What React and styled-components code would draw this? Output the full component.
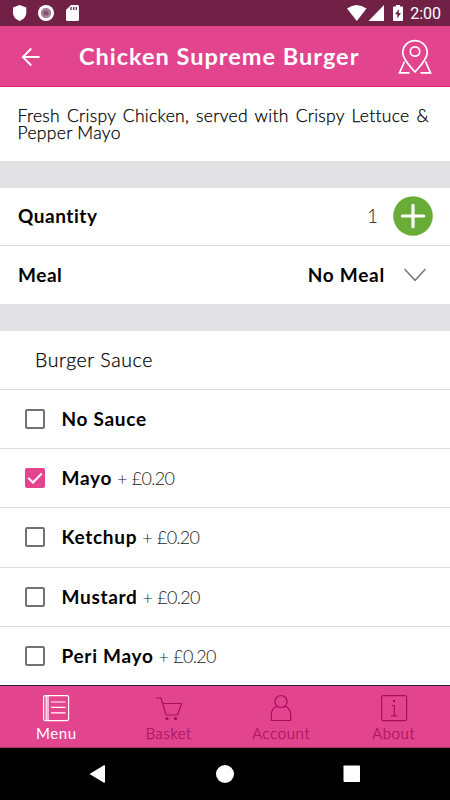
import React, { useState } from 'react';
import styled, { createGlobalStyle } from 'styled-components';

const GlobalStyle = createGlobalStyle`
    * {
        box-sizing: border-box;
    }
    body {
        margin: 0;
        background: #ffffff;
        font-family: Lato, "Open Sans", sans-serif;
    }
`

/* Styled Components */

const Screen = styled.div`
    width: 450px;
    height: 800px;
    display: flex;
    flex-direction: column;
    overflow: hidden;
    background: #ffffff;
    color: #000000;
`
const StatusBar = styled.div`
    height: 26px;
    flex: none;
    display: flex;
    justify-content: space-between;
    background: #722146;
`
const Header = styled.header`
    height: 61px;
    flex: none;
    display: flex;
    align-items: center;
    background: #e2448d;
    border-bottom: 1px solid #dc2c80;
    color: #ffffff;
`
const BackButton = styled.button`
    width: 79px;
    height: 60px;
    padding: 0;
    border: 0;
    background: none;
`
const Title = styled.h1`
    flex: 1;
    margin: 0;
    font-size: 23.5px;
    font-weight: 700;
    line-height: 28px;
    letter-spacing: 1px;
    white-space: nowrap;
`
const PinButton = styled.button`
    width: 70px;
    height: 60px;
    padding: 0;
    border: 0;
    background: none;
`
const Description = styled.p`
    height: 74px;
    flex: none;
    margin: 0;
    padding: 20px 21px 0 17.5px;
    font-size: 17.5px;
    font-weight: 300;
    line-height: 17.3px;
    letter-spacing: 0.3px;
    text-align: justify;
    -webkit-text-stroke: 0.25px #000000;
`
const Divider = styled.div`
    height: 27px;
    flex: none;
    background: #e1e1e3;
`
const Row = styled.div`
    height: ${props => props.$height || 59}px;
    flex: none;
    display: flex;
    align-items: center;
    padding: 0 17px ${props => props.$lift || 0}px 18px;
    border-bottom: ${props => (props.$last ? 'none' : '1px solid #dcdcde')};
`
const RowLabel = styled.span`
    font-size: 19px;
    font-weight: 700;
    line-height: 24px;
    letter-spacing: ${props => props.$spacing || 0.55}px;
    white-space: nowrap;
`
const RowValue = styled(RowLabel)`
    margin-left: auto;
    margin-right: 19px;
`
const Count = styled.span`
    margin-left: auto;
    margin-right: 15px;
    font-size: 19px;
    font-weight: 300;
    line-height: 24px;
    color: #222222;
`
const AddButton = styled.button`
    width: 40px;
    height: 40px;
    padding: 0;
    border: 0;
    background: none;
`
const GroupTitle = styled.h2`
    margin: 0 0 0 17px;
    font-size: 19.5px;
    font-weight: 300;
    line-height: 24px;
    letter-spacing: 0.6px;
    -webkit-text-stroke: 0.25px #000000;
`
const Option = styled.label`
    height: 59.2px;
    flex: none;
    display: flex;
    align-items: center;
    padding-left: 25px;
    border-bottom: 1px solid ${props => (props.$last ? '#27292f' : '#dcdcde')};
`
const CheckBox = styled.span`
    width: 20px;
    height: 20px;
    flex: none;
    margin-right: 16.5px;
    border: 2px solid ${props => (props.$checked ? '#e2448d' : '#727272')};
    border-radius: 2px;
    background: ${props => (props.$checked ? '#e2448d' : '#ffffff')};

    svg {
        display: block;
    }
`
const HiddenInput = styled.input`
    display: none;
`
const Price = styled.span`
    margin-left: 5px;
    font-size: 18px;
    font-weight: 300;
    line-height: 24px;
    letter-spacing: -0.7px;
    word-spacing: 0.8px;
    color: #222222;
`
const TabBar = styled.nav`
    height: 62px;
    flex: none;
    display: grid;
    grid-template-columns: repeat(4, 1fr);
    background: #e2448d;
    border-bottom: 1px solid #b3336e;
`
const Tab = styled.div`
    display: flex;
    flex-direction: column;
    align-items: center;
    padding-top: 8px;
    color: ${props => (props.$active ? '#ffffff' : '#a8105a')};
    font-size: 15px;
    font-weight: ${props => (props.$active ? 400 : 300)};
    line-height: 20px;
    letter-spacing: ${props => props.$spacing}px;
    -webkit-text-stroke: ${props => (props.$active ? 0 : 0.25)}px currentColor;

    svg {
        flex: none;
        margin-bottom: 1px;
    }
`
const SystemNav = styled.div`
    flex: 1;
    display: flex;
    justify-content: center;
    gap: 99px;
    padding-top: 12px;
    background: #000000;
`

const sauces = [
    { name: 'No Sauce', price: null },
    { name: 'Mayo', price: '£0.20' },
    { name: 'Ketchup', price: '£0.20' },
    { name: 'Mustard', price: '£0.20' },
    { name: 'Peri Mayo', price: '£0.20' },
];

const Clock = styled.span`
    padding: 1px 9px 0 0;
    font-family: Roboto, sans-serif;
    font-size: 16px;
    line-height: 26px;
    color: #ffffff;
`
const StatusRight = styled.div`
    display: flex;
    gap: 5px;
`

function StatusIcons() {
    return (
        <svg width="90" height="26" fill="#fff">
            <path d="M19.600 5 26.300 7.400V12.500C26.300 16.500 23.500 19.500 19.600 21 15.700 19.500 13 16.500 13 12.500V7.400Z" />
            <circle cx="46" cy="13" r="8" />
            <circle cx="46" cy="13" r="5.200" fill="#a9819a" />
            <circle cx="46" cy="13" r="2.600" fill="#87506f" />
            <path d="M71 5H77.500Q79 5 79 6.500V19.500Q79 21 77.500 21H67.500Q66 21 66 19.500V10Z" />
            <path d="M71 7V10M73.700 7V10M76.300 7V10" stroke="#722146" strokeWidth="1.300" />
        </svg>
    );
}

function SignalIcons() {
    return (
        <svg width="58" height="26" fill="#fff">
            <path d="M0 8.500Q9.500 1.500 19.500 8.500L9.800 21Z" />
            <path d="M37 5V21H21.500Z" />
            <path d="M49 5H53V6.500H55.500Q56 6.500 56 7V20.300Q56 21 55.300 21H46.700Q46 21 46 20.300V7Q46 6.500 46.500 6.500H49Z" />
            <path d="M52 9 48 14.300H50.300V18.500L54 13H51.700Z" fill="#722146" />
        </svg>
    );
}

function MenuIcon() {
    return (
        <svg width="28" height="28" fill="none" stroke="currentColor" strokeWidth="1.200">
            <rect x="1.600" y="1.600" width="25" height="25" rx="1.500" />
            <path d="M4.200 2V26.500M6 2V26.500M9 8H23.500M9 13.400H23.500M9 18.800H23.500" />
        </svg>
    );
}

function BasketIcon() {
    return (
        <svg width="28" height="28" fill="none" stroke="currentColor" strokeWidth="1.200">
            <path d="M1 4H6L11 21H22.500L26.500 9.500H7.800" />
            <circle cx="12" cy="24.700" r="1" fill="currentColor" />
            <circle cx="20.500" cy="24.700" r="1" fill="currentColor" />
        </svg>
    );
}

function AccountIcon() {
    return (
        <svg width="28" height="28" fill="none" stroke="currentColor" strokeWidth="1.200">
            <circle cx="14" cy="7.500" r="6" />
            <path d="M10 12Q4.300 14.500 4.300 21V26.500H23.700V21Q23.700 14.500 18 12" />
        </svg>
    );
}

function AboutIcon() {
    return (
        <svg width="28" height="28" fill="none" stroke="currentColor" strokeWidth="1.200">
            <rect x="1.600" y="1.600" width="25" height="25" rx="1.500" />
            <path d="M11.500 11.500H14.300V21.500M11 21.800H17.500" />
            <circle cx="14" cy="7" r=".7" fill="currentColor" />
        </svg>
    );
}

export default function App() {
    const [selected, setSelected] = useState(['Mayo']);
    const [count, setCount] = useState(1);

    const toggle = name => {
        setSelected(selected.includes(name) ? selected.filter(s => s !== name) : [...selected, name]);
    };

    return (
        <Screen>
            <GlobalStyle />
            <StatusBar>
                <StatusIcons />
                <StatusRight>
                    <SignalIcons />
                    <Clock>2:00</Clock>
                </StatusRight>
            </StatusBar>
            <Header>
                <BackButton>
                    <svg width="79" height="60" fill="none" stroke="#fff" strokeWidth="1.800">
                        <path d="M39.500 31H23M31.300 22.500 22.800 31 31.300 39.500" />
                    </svg>
                </BackButton>
                <Title>Chicken Supreme Burger</Title>
                <PinButton>
                    <svg width="70" height="60" fill="none" stroke="#fff" strokeWidth="1.700">
                        <path d="M35 46Q22.800 33 22.800 26.800A12.200 12.200 0 0 1 47.200 26.800Q47.200 33 35 46Z" />
                        <circle cx="35" cy="25.500" r="4.700" />
                        <path d="M24.500 35.500 19.500 46.800H29.500M45.500 35.500 50.500 46.800H40.500" />
                    </svg>
                </PinButton>
            </Header>
            <Description>
                Fresh Crispy Chicken, served with Crispy Lettuce &amp; Pepper Mayo
            </Description>
            <Divider />
            <Row $height={58} $lift={1.5}>
                <RowLabel>Quantity</RowLabel>
                <Count>{count}</Count>
                <AddButton onClick={() => setCount(count + 1)}>
                    <svg width="40" height="40">
                        <circle cx="20" cy="20" r="19.800" fill="#69ad36" />
                        <path d="M20 9.300V30.700M9.300 20H30.700" stroke="#fff" strokeWidth="3.200" strokeLinecap="round" />
                    </svg>
                </AddButton>
            </Row>
            <Row $height={58} $last>
                <RowLabel>Meal</RowLabel>
                <RowValue $spacing={0.75}>No Meal</RowValue>
                <svg width="29" height="20" fill="none" stroke="#777" strokeWidth="1.500">
                    <path d="M.5 4 11 15.300 21.500 4" />
                </svg>
            </Row>
            <Divider />
            <Row>
                <GroupTitle>Burger Sauce</GroupTitle>
            </Row>
            {sauces.map((sauce, i) => (
                <Option key={sauce.name} $last={i === sauces.length - 1}>
                    <HiddenInput
                        type="checkbox"
                        checked={selected.includes(sauce.name)}
                        onChange={() => toggle(sauce.name)}
                    />
                    <CheckBox $checked={selected.includes(sauce.name)}>
                        {selected.includes(sauce.name) && (
                            <svg width="16" height="16" fill="none" stroke="#fff" strokeWidth="2">
                                <path d="M1.300 8 6 12.500 14.800 3.500" />
                            </svg>
                        )}
                    </CheckBox>
                    <RowLabel $spacing={0.7}>{sauce.name}</RowLabel>
                    {sauce.price && <Price>+ {sauce.price}</Price>}
                </Option>
            ))}
            <TabBar>
                <Tab $active $spacing={0.6}><MenuIcon />Menu</Tab>
                <Tab $spacing={0.6}><BasketIcon />Basket</Tab>
                <Tab $spacing={0.65}><AccountIcon />Account</Tab>
                <Tab $spacing={0.6}><AboutIcon />About</Tab>
            </TabBar>
            <SystemNav>
                <svg width="28" height="28" fill="#fff"><path d="M5.500 14 20 5.300Q21 5 21 6V22Q21 23 20 22.700Z" /></svg>
                <svg width="28" height="28" fill="#fff"><circle cx="14" cy="14" r="9" /></svg>
                <svg width="28" height="28" fill="#fff"><rect x="5.500" y="5.500" width="16.500" height="16.500" rx=".7" /></svg>
            </SystemNav>
        </Screen>
    );
}
